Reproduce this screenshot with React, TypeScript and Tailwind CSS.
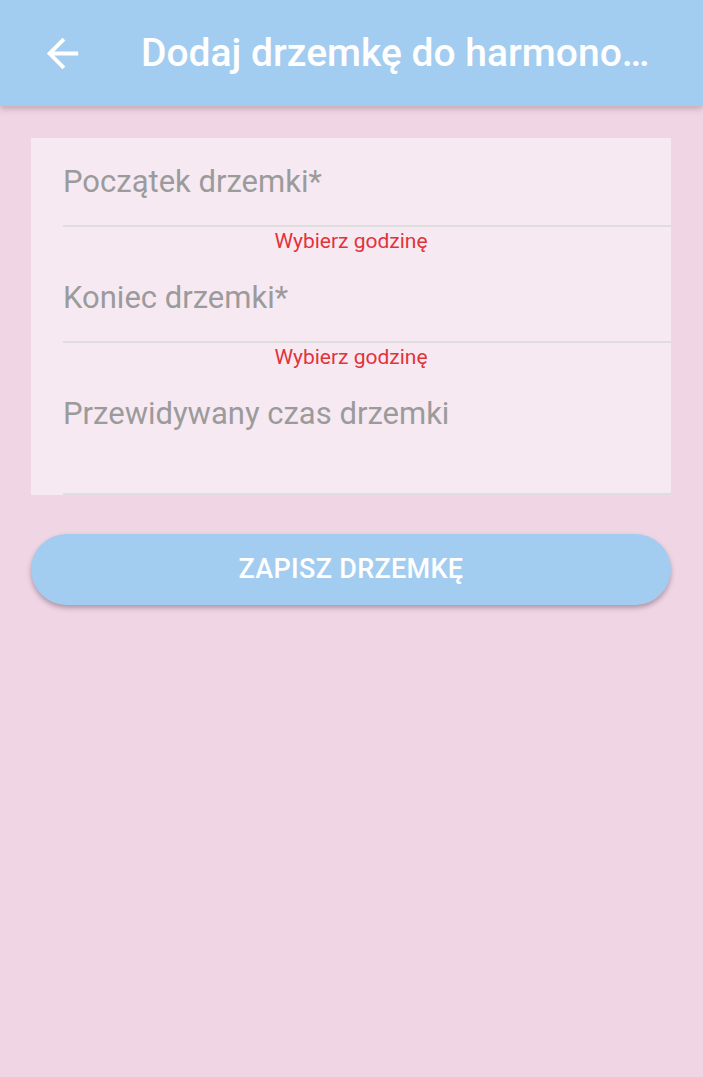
export default function App() {
  const fields = [
    { label: "Początek drzemki*", error: "Wybierz godzinę", h: "h-[89px]" },
    { label: "Koniec drzemki*", error: "Wybierz godzinę", h: "h-[89px]" },
    { label: "Przewidywany czas drzemki", error: "", h: "h-[125px]" },
  ];

  return (
    <div className="min-h-[1077px] bg-[#f0d6e5] font-['Roboto',sans-serif]">
      <header className="relative z-10 flex h-[106px] items-center bg-[#a3cdf0] pr-[46px] shadow-[0_3px_6px_rgba(120,80,100,0.35)]">
        <button className="ml-[39px] flex h-[47px] w-[47px] items-center justify-center text-white">
          <svg viewBox="0 0 24 24" className="h-[47px] w-[47px]" fill="currentColor">
            <path d="M20 11H7.83l5.59-5.59L12 4l-8 8 8 8 1.41-1.41L7.83 13H20v-2z" />
          </svg>
        </button>
        <h1 className="ml-[55px] min-w-0 flex-1 truncate text-[39px] font-medium leading-[48px] text-white">
          Dodaj drzemkę do harmonogramu
        </h1>
      </header>

      <main className="px-[31px] pr-[32px] pt-[32px]">
        <div className="bg-[#f7e9f2]">
          {fields.map((f, i) => (
            <div key={i}>
              <div className={`${f.h} ml-[32px] border-b-2 border-[#dedede] pt-[25px]`}>
                <span className="block text-[31px] leading-[38px] text-[#9b9b9b]">{f.label}</span>
              </div>
              {f.error && (
                <div className="h-[27px] pt-[1px] text-center text-[21px] leading-[26px] text-[#e2333a]">{f.error}</div>
              )}
            </div>
          ))}
        </div>

        <button className="mt-[39px] h-[71px] w-full rounded-full bg-[#a3cdf0] text-[27px] font-medium tracking-[0.3px] text-white shadow-[0_3px_5px_rgba(100,70,90,0.45)]">
          ZAPISZ DRZEMKĘ
        </button>
      </main>
    </div>
  );
}
